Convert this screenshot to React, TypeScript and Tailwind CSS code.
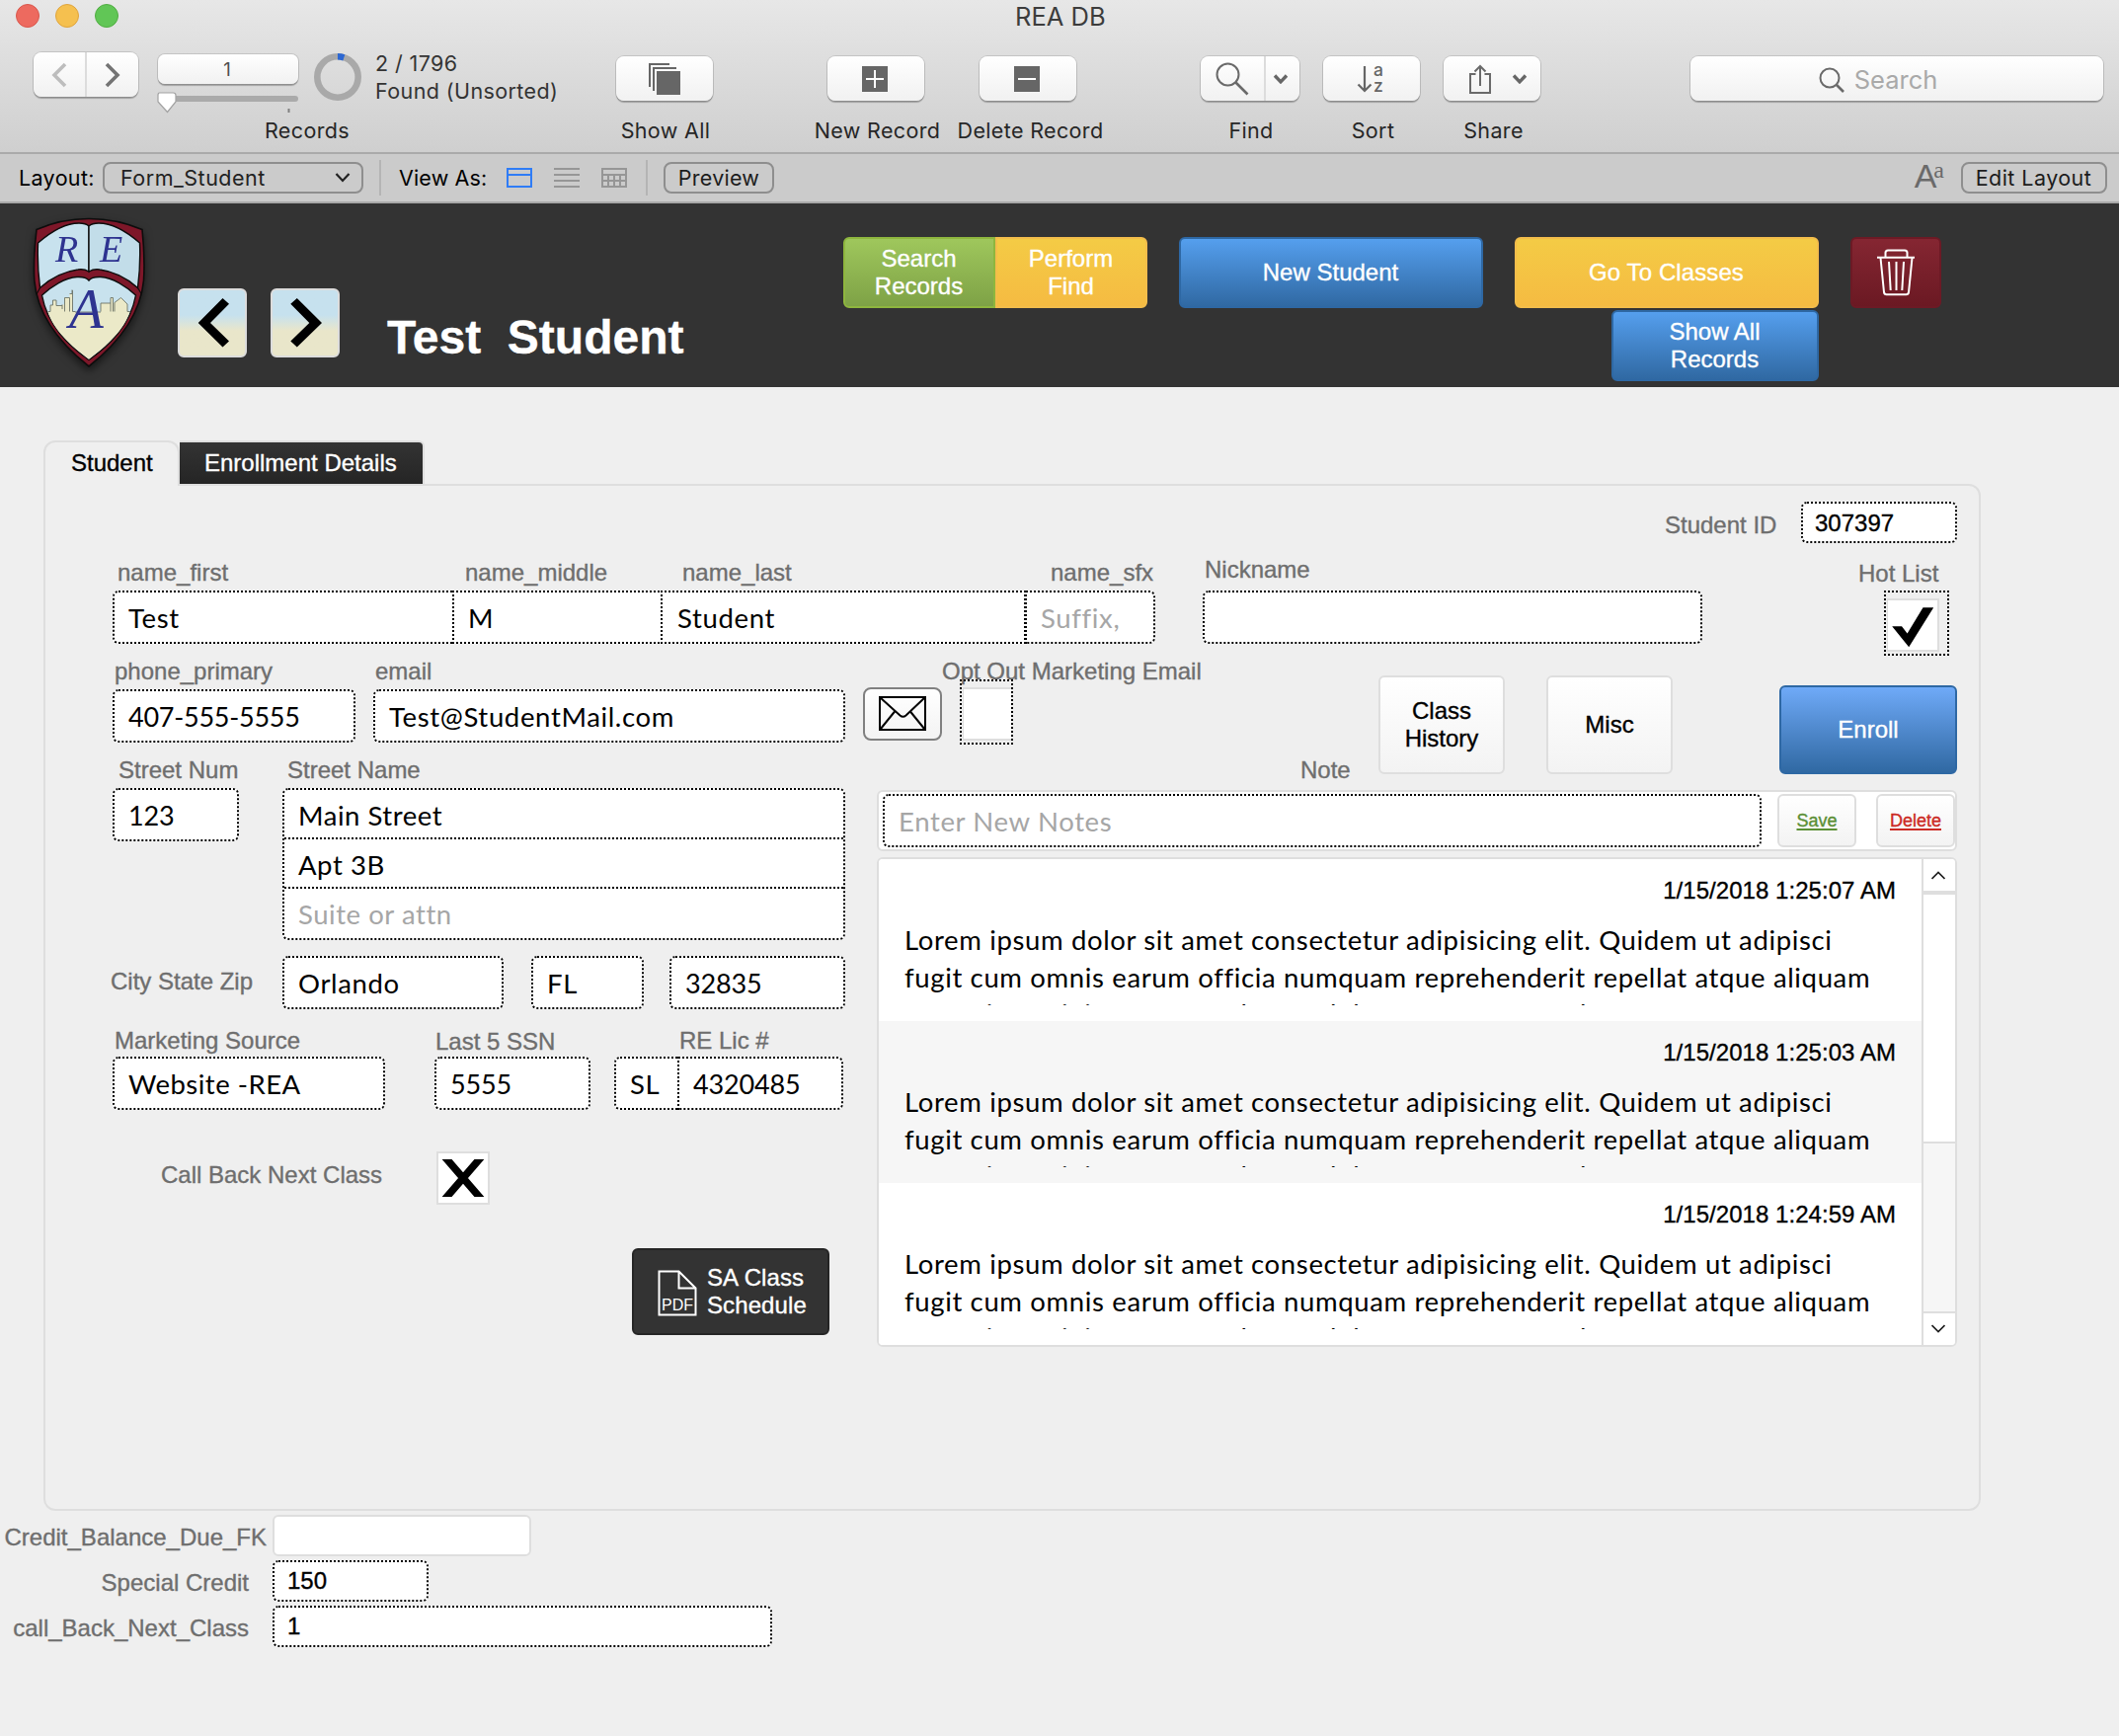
import type { ReactNode } from "react";

const UI = "font-['Inter',sans-serif] [-webkit-text-stroke:0px]";

/* ---------- shared pieces ---------- */

function Label({ children, className = "" }: { children: ReactNode; className?: string }) {
  return (
    <div className={`shrink-0 whitespace-pre pl-px text-[24px] leading-[28px] text-[#6e6e6e] ${className}`}>{children}</div>
  );
}

function Field({
  children,
  className = "",
  placeholder = false,
  numeric = false,
}: {
  children?: ReactNode;
  className?: string;
  placeholder?: boolean;
  numeric?: boolean;
}) {
  return (
    <div
      className={`flex h-[54px] shrink-0 items-center whitespace-nowrap border-2 border-dotted border-black bg-white pl-[14px] pt-[2px] font-['Lato',sans-serif] leading-[34px] [-webkit-text-stroke:0px] ${
        numeric ? "text-[27px] tracking-[-0.15px]" : "text-[27.5px] tracking-[0.65px]"
      } ${placeholder ? "text-[#a6a6a6]" : "text-black"} ${className}`}
    >
      {children}
    </div>
  );
}

function ToolButton({ children, className = "" }: { children?: ReactNode; className?: string }) {
  return (
    <div
      className={`flex h-[45px] items-center justify-center rounded-[8px] bg-linear-to-b from-white to-[#f1f1f1] shadow-[0_0_0_1px_rgba(0,0,0,0.12),0_2px_1px_rgba(0,0,0,0.25)] ${className}`}
    >
      {children}
    </div>
  );
}

function ToolItem({ label, className = "", children }: { label: string; className?: string; children: ReactNode }) {
  return (
    <div className={`flex shrink-0 flex-col items-center ${className}`}>
      {children}
      <div className="mt-[16px] whitespace-nowrap pl-[3px] text-[21.5px] leading-[28px] tracking-[0.35px] text-[#262626]">
        {label}
      </div>
    </div>
  );
}

function HeaderButton({ children, className = "" }: { children: ReactNode; className?: string }) {
  return (
    <div
      className={`flex h-[72px] shrink-0 items-center justify-center border-2 bg-linear-to-b pr-px text-center text-[24px] leading-[28px] text-white ${className}`}
    >
      {children}
    </div>
  );
}

function Chevron({ className = "" }: { className?: string }) {
  return (
    <svg className={className} width="16" height="10" viewBox="0 0 16 10" fill="none" stroke="#666" strokeWidth="3.400">
      <path d="M2 1.5 8 7.8 14 1.5" />
    </svg>
  );
}

/* ---------- window chrome ---------- */

function Toolbar() {
  return (
    <div className={`h-[156px] border-b-2 border-[#aaaaaa] bg-linear-to-b from-[#e7e7e7] to-[#cfcfcf] ${UI}`}>
      <div className="flex h-[53px] items-start">
        <div className="ml-[16px] mt-[4px] flex gap-[16px]">
          <div className="size-[24px] rounded-full border border-[#d9574c] bg-[#ed6a5f]" />
          <div className="size-[24px] rounded-full border border-[#dfa43c] bg-[#f5c04f]" />
          <div className="size-[24px] rounded-full border border-[#51ad42] bg-[#61c656]" />
        </div>
        <div className="ml-[908px] text-[25.5px] leading-[34px] text-[#3c3c3c]">REA DB</div>
      </div>
      <div className="flex items-start">
        <div className="ml-[34px] flex h-[45px] w-[106px] shrink-0 rounded-[8px] bg-linear-to-b from-white to-[#f1f1f1] shadow-[0_0_0_1px_rgba(0,0,0,0.12),0_2px_1px_rgba(0,0,0,0.25)]">
          <div className="flex w-[54px] items-center justify-center border-r-2 border-[#dcdcdc]">
            <svg width="16" height="26" viewBox="0 0 16 26" fill="none" stroke="#bdbdbd" strokeWidth="3.6">
              <path d="M14 2 3 13 14 24" />
            </svg>
          </div>
          <div className="flex w-[52px] items-center justify-center">
            <svg width="16" height="26" viewBox="0 0 16 26" fill="none" stroke="#747474" strokeWidth="3.6">
              <path d="M2 2 13 13 2 24" />
            </svg>
          </div>
        </div>
        <div className="ml-[20px] flex w-[404px] shrink-0 flex-col">
          <div className="flex h-[62px]">
            <div className="w-[142px]">
              <div className="mt-[2px] flex h-[30px] items-center justify-center rounded-[7px] bg-linear-to-b from-white to-[#f1f1f1] pr-[2px] pt-[2px] text-[18.5px] text-[#4f4f4f] shadow-[0_0_0_1px_rgba(0,0,0,0.12),0_2px_1px_rgba(0,0,0,0.25)]">
                1
              </div>
              <svg className="mt-[8px] overflow-visible" width="142" height="22" viewBox="0 0 142 22">
                <rect x="6" y="4" width="136" height="6" rx="3" fill="#aaaaaa" />
                <rect x="131.5" y="17" width="2" height="4" fill="#808080" />
                <path
                  d="M1.5 1H15.500q2.500 0 2.500 2.500V10L9.500 20.500 0 10V3.500Q0 1 1.500 1Z"
                  fill="#fff"
                  stroke="#a2a2a2"
                  strokeWidth="1.200"
                />
              </svg>
            </div>
            <svg className="ml-[16px] mt-px shrink-0" width="48" height="48" viewBox="0 0 48 48" fill="none">
              <circle cx="24" cy="24" r="20.700" stroke="#a9a9a9" strokeWidth="6.600" />
              <path d="M24 3.300A20.700 20.700 0 0 1 30.300 4.300" stroke="#2c67d2" strokeWidth="6.600" />
            </svg>
            <div className="-mt-[3px] ml-[14px] whitespace-nowrap text-[21.5px] leading-[28px] tracking-[0.4px] text-[#333]">
              <div>2 / 1796</div>
              <div>Found (Unsorted)</div>
            </div>
          </div>
          <div className="ml-[108px] mt-[3px] text-[21.5px] leading-[28px] tracking-[0.35px] text-[#262626]">Records</div>
        </div>
        <ToolItem label="Show All" className="ml-[59px] mt-[4px] w-[99px]">
          <ToolButton className="w-[98px]">
            <svg width="32" height="32" viewBox="0 0 32 32" fill="none" stroke="#666" strokeWidth="2">
              <path d="M1 24V1H21M5 28V5H28" />
              <path d="M8 8H32V32H8Z" fill="#666" stroke="none" />
            </svg>
          </ToolButton>
        </ToolItem>
        <ToolItem label="New Record" className="ml-[101px] mt-[4px] w-[128px]">
          <ToolButton className="w-[98px] pr-[2px]">
            <svg width="26" height="26" viewBox="0 0 26 26" fill="none" stroke="#fff" strokeWidth="2">
              <path d="M0 0H26V26H0Z" fill="#666" stroke="none" />
              <path d="M4 13H22M13 4V22" />
            </svg>
          </ToolButton>
        </ToolItem>
        <ToolItem label="Delete Record" className="ml-[16px] mt-[4px] w-[150px]">
          <ToolButton className="mr-[3px] w-[98px] pr-[2px]">
            <svg width="26" height="26" viewBox="0 0 26 26" fill="none" stroke="#fff" strokeWidth="2">
              <path d="M0 0H26V26H0Z" fill="#666" stroke="none" />
              <path d="M4 13H22" />
            </svg>
          </ToolButton>
        </ToolItem>
        <ToolItem label="Find" className="ml-[97px] mt-[4px] w-[103px]">
          <ToolButton className="w-[100px]">
            <div className="flex h-full w-[66px] items-center justify-center border-r-2 border-[#dcdcdc] pt-px">
              <svg width="34" height="34" viewBox="0 0 34 34" fill="none" stroke="#6a6a6a" strokeWidth="2">
                <circle cx="12.500" cy="12.500" r="11" />
                <path d="M20.500 20.500 32.500 32.500" strokeWidth="2.600" />
              </svg>
            </div>
            <div className="flex w-[34px] items-center justify-center pr-[3px]">
              <Chevron />
            </div>
          </ToolButton>
        </ToolItem>
        <ToolItem label="Sort" className="ml-[22px] mt-[4px] w-[100px]">
          <ToolButton className="w-[98px]">
            <svg className="overflow-visible" width="28" height="30" viewBox="0 0 28 30" fill="none" stroke="#666" strokeWidth="2.200">
              <path d="M7 2V27M0.500 20.500 7 27 13.500 20.500" />
              <text x="16" y="12" className="font-['Inter',sans-serif]" fontSize="17.500" fontWeight="500" fill="#666" stroke="none">
                a
              </text>
              <text x="16" y="27.500" className="font-['Inter',sans-serif]" fontSize="17.500" fontWeight="500" fill="#666" stroke="none">
                z
              </text>
            </svg>
          </ToolButton>
        </ToolItem>
        <ToolItem label="Share" className="ml-[23px] mt-[4px] w-[98px]">
          <ToolButton className="w-[98px] gap-[20px]">
            <svg className="ml-[12px]" width="24" height="32" viewBox="0 0 24 32" fill="none" stroke="#6a6a6a" strokeWidth="2">
              <path d="M7.500 11H2V30H22V11H16.500M12 23V3M6.500 8.500 12 3 17.500 8.500" />
            </svg>
            <Chevron />
          </ToolButton>
        </ToolItem>
        <ToolButton className="ml-[152px] mt-[4px] w-[418px] shrink-0 pr-[38px]">
          <svg className="mt-[2px]" width="26" height="26" viewBox="0 0 26 26" fill="none" stroke="#6a6a6a" strokeWidth="2">
            <circle cx="11" cy="11" r="9.500" />
            <path d="M18 18 25 25" strokeWidth="2.600" />
          </svg>
          <div className="ml-[10px] mt-[2px] text-[25.5px] leading-[34px] text-[#a9a9a9]">Search</div>
        </ToolButton>
      </div>
    </div>
  );
}

function LayoutBar() {
  return (
    <div
      className={`flex h-[50px] items-center border-b-2 border-[#a9a9a9] bg-[#cbcbcb] pb-[1px] text-[21.5px] leading-[28px] tracking-[0.25px] text-black ${UI}`}
    >
      <div className="ml-[19px] w-[85px] shrink-0 whitespace-nowrap tracking-[0.35px]">Layout:</div>
      <div className="flex h-[32px] w-[264px] shrink-0 items-center justify-between rounded-[8px] border-2 border-[#8e8e8e] pl-[16px] pr-[11px] tracking-[0.5px] text-[#222]">
        <span>Form_Student</span>
        <svg width="16" height="10" viewBox="0 0 16 10" fill="none" stroke="#222" strokeWidth="2.200">
          <path d="M1.500 1 8 8 14.500 1" />
        </svg>
      </div>
      <div className="ml-[16px] h-[36px] w-[2px] bg-[#b4b4b4]" />
      <div className="ml-[18px] w-[109px] shrink-0 whitespace-nowrap tracking-[0.15px]">View As:</div>
      <svg width="26" height="20" viewBox="0 0 26 20" fill="none" stroke="#2f7cf6" strokeWidth="2">
        <path d="M1 1H25V19H1ZM1 7H25" />
      </svg>
      <svg className="ml-[22px]" width="26" height="20" viewBox="0 0 26 20" fill="none" stroke="#969696" strokeWidth="2">
        <path d="M0 1H26M0 7H26M0 13H26M0 19H26" />
      </svg>
      <svg className="ml-[22px]" width="26" height="20" viewBox="0 0 26 20" fill="none" stroke="#969696" strokeWidth="2">
        <path d="M1 1H25V19H1ZM1 7H25M1 13H25M7 7V19M13 7V19M19 7V19" />
      </svg>
      <div className="ml-[19px] h-[36px] w-[2px] bg-[#b4b4b4]" />
      <div className="ml-[16px] flex h-[32px] w-[112px] items-center justify-center rounded-[8px] border-2 border-[#8e8e8e] text-[#1c1c1c]">
        Preview
      </div>
      <div className="ml-auto mr-[17px] flex h-[28px] items-start leading-none tracking-normal text-[#6a6a6a]">
        <span className="-mt-[4px] font-['Liberation_Sans',sans-serif] text-[34px] leading-[32px] tracking-[-3px]">A</span>
        <span className="-mt-[4px] font-['Liberation_Serif',serif] text-[24px] leading-[20px]">a</span>
      </div>
      <div className="mr-[12px] flex h-[32px] w-[148px] items-center justify-center whitespace-nowrap rounded-[8px] border-2 border-[#8e8e8e] pr-px tracking-[0.45px] text-[#1c1c1c]">
        Edit Layout
      </div>
    </div>
  );
}

/* ---------- school header ---------- */

function Crest() {
  return (
    <svg
      className="ml-[28px] mt-[10px] shrink-0 drop-shadow-[0_4px_4px_rgba(0,0,0,0.55)]"
      width="124"
      height="162"
      viewBox="28 216 124 162"
    >
      <path
        d="M37 232.500Q62 221.500 90 221.500T144 232.500Q147 262 145.500 284C142 322 114 352 90 371C66 352 38 322 34.800 284Q33.500 262 37 232.500Z"
        fill="#7e1729"
        stroke="#0d0d0d"
        strokeWidth="1.600"
      />
      <path
        d="M38.500 246C50 236 66 226 80 226Q87 226 90 229V275Q85 272 79 273C64 275 50 283 40.500 291.500Q37.500 268 38.500 246Z"
        fill="#c8e2ee"
        stroke="#0d0d0d"
        strokeWidth="1.400"
      />
      <path
        d="M141.500 246C130 236 114 226 100 226Q93 226 90 229V275Q95 272 101 273C116 275 130 283 139.500 291.500Q142.500 268 141.500 246Z"
        fill="#c2dde9"
        stroke="#0d0d0d"
        strokeWidth="1.400"
      />
      <path
        d="M42.500 299C52 290 66 281 78 280.500Q87 280 90 284Q93 280 102 280.500C114 281 128 290 137.500 299C132 330 110 350 90 364.500C70 350 48 330 42.500 299Z"
        fill="#c8e2ee"
        stroke="#0d0d0d"
        strokeWidth="1.400"
      />
      <path
        d="M48.500 315.500H51V309H53.500V304H57V309.500H63V308.500H65V301.500H70.500V297.500H73V293.500V315.500H76V316H102V307H112V301.500H114.500V306.500H116L122.500 301.500 129 308V315.500H131.500C126 334 108 350.500 90 363.700C72 350.500 54 334 48.500 315.500Z"
        fill="#ebe9c8"
      />
      <path
        d="M48.500 315.500H51V309H53.500V304H57V309.500H63M63 308.500V313M65.500 315.500V301.500H70.500V315.500M70.500 297.500H73V293.500M73.500 294V315.500H76V316M102 315.500V307H112V301.500H114.500V315.500M112 307V315.500M116 315.500V306.500L122.500 301.500 129 308V315.500H132M76 316H102"
        fill="none"
        stroke="#6d7467"
        strokeWidth="0.900"
      />
      <path d="M40.500 291.500 37 298M139.500 291.500 143.500 298" stroke="#0d0d0d" strokeWidth="1.200" />
      <g className="font-['Liberation_Serif',serif] italic" fill="#2e3390">
        <text x="56" y="264.500" fontSize="38">
          R
        </text>
        <text x="101" y="264.500" fontSize="38">
          E
        </text>
        <text x="70" y="331.500" fontSize="57">
          A
        </text>
      </g>
    </svg>
  );
}

function ArrowButton({ d, className = "" }: { d: string; className?: string }) {
  return (
    <div
      className={`size-[70px] shrink-0 rounded-[6px] border-2 border-[#dcdcdc] bg-linear-to-b from-[#c6e1ee] from-38% to-[#e9e6ca] to-62% ${className}`}
    >
      <svg width="66" height="66" viewBox="0 0 66 66">
        <path d={d} fill="#000" />
      </svg>
    </div>
  );
}

function SchoolHeader() {
  return (
    <div className="flex h-[186px] items-start bg-[#333333]">
      <Crest />
      <ArrowButton className="ml-[28px] mt-[86px]" d="M43.500 8 50 13.700 31 33 50 51.500 43.500 57.500 18.700 33Z" />
      <ArrowButton className="ml-[24px] mt-[86px]" d="M24.800 8 18.300 13.700 37.300 33 18.300 51.500 24.800 57.500 50 33Z" />
      <div className="ml-[48px] mt-[109px] w-[462px] shrink-0 whitespace-pre text-[48px] font-bold leading-[54px] text-white">
        {"Test  Student"}
      </div>
      <div className="mt-[34px] flex items-start">
        <HeaderButton className="w-[154px] rounded-l-[6px] border-[#8eb63e] from-[#9fc75c] to-[#7ea246]">
          Search
          <br />
          Records
        </HeaderButton>
        <HeaderButton className="w-[154px] rounded-r-[6px] border-[#f3bd4b] from-[#f4cb45] to-[#f5bb42]">
          Perform
          <br />
          Find
        </HeaderButton>
        <HeaderButton className="ml-[32px] w-[308px] rounded-[6px] border-[#2e68a4] from-[#559fee] to-[#3069a3]">
          New Student
        </HeaderButton>
        <div className="ml-[32px] flex w-[308px] flex-col items-end gap-[2px]">
          <HeaderButton className="w-[308px] rounded-[6px] border-[#f3bd4b] from-[#f4cb45] to-[#f5bb42] tracking-[0.1px]">
            Go To Classes
          </HeaderButton>
          <HeaderButton className="w-[210px] rounded-[6px] border-[#2e68a4] from-[#559fee] to-[#3069a3]">
            Show All
            <br />
            Records
          </HeaderButton>
        </div>
        <HeaderButton className="ml-[32px] w-[92px] rounded-[6px] border-[#6d1a25] from-[#852632] to-[#6b1923]">
          <svg width="38" height="48" viewBox="0 0 38 48" fill="none" stroke="#fff" strokeWidth="2">
            <path d="M0 8.700H38M8.500 8.500V4Q8.500 1.500 11 1.500H28Q30.500 1.500 30.500 4V8.500" />
            <path d="M3.500 9 7 44Q7.300 46.200 9.500 46.200H29.500Q31.700 46.200 32 44L35.500 9" />
            <path d="M12 13 13.700 42M19.500 13V42M27 13 25.300 42" />
          </svg>
        </HeaderButton>
      </div>
    </div>
  );
}

/* ---------- form panel ---------- */

function Tabs() {
  return (
    <div className="relative z-10 -mb-[2px] ml-[44px] flex h-[46px] items-start">
      <div className="h-[46px] w-[138px] rounded-t-[12px] border-2 border-b-0 border-[#dedede] bg-[#efefef] pl-[26px] pt-[7px] text-[24px] leading-[28px] text-black">
        Student
      </div>
      <div className="h-[44px] w-[248px] rounded-tr-[6px] border-r-2 border-t-2 border-[#dedede] bg-linear-to-b from-[#333] to-[#252525] pl-[25px] pt-[7px] text-[24px] leading-[28px] text-white">
        Enrollment Details
      </div>
    </div>
  );
}

function PlainButton({ children, className = "" }: { children: ReactNode; className?: string }) {
  return (
    <div
      className={`flex shrink-0 items-center justify-center rounded-[6px] border-2 border-[#dedede] bg-linear-to-b from-white to-[#f3f3f3] text-center ${className}`}
    >
      {children}
    </div>
  );
}

const notes = [
  { stamp: "1/15/2018 1:25:07 AM", shaded: false },
  { stamp: "1/15/2018 1:25:03 AM", shaded: true },
  { stamp: "1/15/2018 1:24:59 AM", shaded: false },
];

function NoteRow({ stamp, shaded }: { stamp: string; shaded: boolean }) {
  return (
    <div className={`h-[164px] pl-[26px] ${shaded ? "bg-[#f6f6f6]" : "bg-white"}`}>
      <div className="h-[60px] pr-[26px] pt-[18px] text-right text-[24px] leading-[28px] tracking-[0.05px] text-black">
        {stamp}
      </div>
      <div className="h-[88px] overflow-hidden whitespace-nowrap pt-[3px] font-['Lato',sans-serif] text-[27.5px] leading-[38px] tracking-[0.64px] text-black [-webkit-text-stroke:0px]">
        <div>Lorem ipsum dolor sit amet consectetur adipisicing elit. Quidem ut adipisci</div>
        <div>fugit cum omnis earum officia numquam reprehenderit repellat atque aliquam</div>
        <div className="-mt-px">rerum iste minima natus vel quas dolor nam quaerat ad error summa. Porro cum velit id beatae</div>
      </div>
    </div>
  );
}

function Notes() {
  return (
    <div className="mt-[2px] w-[1094px] shrink-0">
      <div className="flex h-[62px] items-start rounded-[6px] border-2 border-[#dedede] bg-white pl-[4px] pt-[2px]">
        <Field placeholder className="w-[890px] rounded-[6px]">
          Enter New Notes
        </Field>
        <PlainButton className="ml-[16px] h-[54px] w-[80px] text-[18px] leading-[22px]">
          <span className="text-[#5b8f35] underline decoration-2 underline-offset-2">Save</span>
        </PlainButton>
        <PlainButton className="ml-[20px] h-[54px] w-[80px] text-[18px] leading-[22px]">
          <span className="text-[#cc2a24] underline decoration-2 underline-offset-2">Delete</span>
        </PlainButton>
      </div>
      <div className="mt-[6px] flex h-[496px] overflow-hidden rounded-[6px] border-2 border-[#dedede] bg-white">
        <div className="w-[1056px]">
          {notes.map((n) => (
            <NoteRow key={n.stamp} {...n} />
          ))}
        </div>
        <div className="flex w-[34px] flex-col border-l-2 border-[#dedede] bg-[#f6f6f6]">
          <div className="flex h-[36px] items-center justify-center border-b-4 border-[#dedede] bg-white pr-[2px] pt-px">
            <svg width="14" height="9" viewBox="0 0 14 9" fill="none" stroke="#222" strokeWidth="1.700">
              <path d="M0.500 8 7 1.500 13.500 8" />
            </svg>
          </div>
          <div className="h-[252px] border-b-2 border-[#dedede] bg-white" />
          <div className="h-[170px]" />
          <div className="flex h-[34px] items-center justify-center border-t-2 border-[#dedede] bg-white pb-[2px] pr-[2px]">
            <svg width="14" height="9" viewBox="0 0 14 9" fill="none" stroke="#222" strokeWidth="1.700">
              <path d="M0.500 1 7 7.500 13.500 1" />
            </svg>
          </div>
        </div>
      </div>
    </div>
  );
}

function Address() {
  return (
    <div className="flex items-start">
      <Field numeric className="ml-[68px] w-[128px] rounded-[6px]">
        123
      </Field>
      <div className="ml-[44px] h-[154px] w-[570px] shrink-0 rounded-[6px] border-2 border-dotted border-black bg-white font-['Lato',sans-serif] text-[27.5px] leading-[34px] tracking-[0.55px] [-webkit-text-stroke:0px]">
        <div className="flex h-[50px] items-center border-b-2 border-dotted border-black pl-[14px] pt-[4px]">Main Street</div>
        <div className="flex h-[50px] items-center border-b-2 border-dotted border-black pl-[14px] pt-[4px]">Apt 3B</div>
        <div className="flex h-[50px] items-center pl-[14px] pt-[2px] text-[#a6a6a6]">Suite or attn</div>
      </div>
    </div>
  );
}

function StudentForm() {
  return (
    <div className="ml-[44px] h-[1040px] w-[1962px] rounded-[12px] rounded-tl-none border-2 border-[#dedede] pt-[16px]">
      <div className="flex h-[42px] items-start">
        <Label className="ml-[1639px] mt-[10px] w-[139px]">Student ID</Label>
        <div className="flex h-[42px] w-[158px] items-center rounded-[6px] border-2 border-dotted border-black bg-white pl-[12px] pt-px text-[24px] leading-[28px]">
          307397
        </div>
      </div>

      <div className="flex h-[48px] items-start">
        <Label className="ml-[72px] mt-[16px] w-[352px]">name_first</Label>
        <Label className="mt-[16px] w-[220px]">name_middle</Label>
        <Label className="mt-[16px] w-[373px]">name_last</Label>
        <Label className="mt-[16px] w-[156px]">name_sfx</Label>
        <Label className="mt-[13px] w-[662px]">Nickname</Label>
        <Label className="mt-[17px]">Hot List</Label>
      </div>

      <div className="flex h-[54px] items-start">
        <Field className="ml-[68px] w-[346px] rounded-l-[6px]">Test</Field>
        <Field className="-ml-[2px] w-[214px]">M</Field>
        <Field className="-ml-[3px] w-[370px] !pl-[15px]">Student</Field>
        <Field placeholder className="-ml-px w-[132px] rounded-r-[6px]">
          Suffix,
        </Field>
        <Field className="ml-[48px] w-[506px] rounded-[6px]" />
        <div className="ml-[184px] h-[66px] w-[66px] shrink-0 border-2 border-dotted border-black pl-[1px] pt-[6px]">
          <div className="h-[54px] w-[53px] border-2 border-l border-[#dedede] bg-white">
            <svg width="50" height="50" viewBox="1912 608 50 50">
              <path d="M1916.200 634.300H1926L1931.600 641.500 1947.500 615.300H1958.200L1933.200 655.300Z" fill="#000" />
            </svg>
          </div>
        </div>
      </div>

      <div className="flex h-[146px] items-start">
        <div className="w-[1350px] shrink-0">
          <div className="flex h-[46px] items-start">
            <Label className="ml-[69px] mt-[14px] w-[264px]">phone_primary</Label>
            <Label className="mt-[14px] w-[574px]">email</Label>
            <Label className="mt-[14px]">Opt Out Marketing Email</Label>
          </div>
          <div className="flex h-[54px] items-start">
            <Field numeric className="ml-[68px] w-[246px] rounded-[6px] !tracking-[-0.25px]">
              407-555-5555
            </Field>
            <Field className="ml-[18px] w-[478px] rounded-[6px]">Test@StudentMail.com</Field>
            <div className="-mt-[2px] ml-[18px] flex h-[54px] w-[80px] shrink-0 items-center justify-center rounded-[8px] border-2 border-[#808080] bg-linear-to-b from-white to-[#f3f3f3]">
              <svg className="-mt-[2px]" width="48" height="35" viewBox="0 0 48 35" fill="none" stroke="#000" strokeWidth="2">
                <path d="M1 1H47V34H1ZM1.500 1.500 21.500 19.500Q24.500 22 27.500 19.500L46.500 1.500M1.500 33.500 16.500 15M46.500 33.500 31.500 15" />
              </svg>
            </div>
            <div className="-mt-[10px] ml-[18px] h-[66px] w-[54px] shrink-0 border-2 border-dotted border-black pl-[1px] pt-[6px]">
              <div className="h-[54px] border-y-2 border-l border-[#dedede] bg-white" />
            </div>
          </div>
          <div className="flex h-[46px] items-start">
            <Label className="ml-[73px] mt-[14px] w-[171px]">Street Num</Label>
            <Label className="mt-[14px] w-[1026px]">Street Name</Label>
            <Label className="mt-[14px]">Note</Label>
          </div>
        </div>
        <PlainButton className="mt-[32px] h-[100px] w-[128px] text-[24px] leading-[28px]">
          Class
          <br />
          History
        </PlainButton>
        <PlainButton className="ml-[42px] mt-[32px] h-[100px] w-[128px] text-[24px] leading-[28px]">Misc</PlainButton>
        <div className="ml-[108px] mt-[42px] flex h-[90px] w-[180px] shrink-0 items-center justify-center rounded-[6px] border-2 border-[#2e68a4] bg-linear-to-b from-[#6faaf8] to-[#3069a3] text-[24px] leading-[28px] text-white">
          Enroll
        </div>
      </div>

      <div className="flex items-start">
        <div className="w-[842px] shrink-0">
          <Address />
          <div className="mt-[16px] flex items-start">
            <Label className="ml-[65px] mt-[12px] w-[175px]">City State Zip</Label>
            <Field className="w-[224px] rounded-[6px]">Orlando</Field>
            <Field className="ml-[28px] w-[114px] rounded-[6px]">FL</Field>
            <Field numeric className="ml-[26px] w-[178px] rounded-[6px]">
              32835
            </Field>
          </div>
          <div className="flex h-[48px] items-start">
            <Label className="ml-[69px] mt-[18px] w-[325px]">Marketing Source</Label>
            <Label className="mt-[19px] w-[247px]">Last 5 SSN</Label>
            <Label className="mt-[18px]">RE Lic #</Label>
          </div>
          <div className="flex items-start">
            <Field className="ml-[68px] w-[276px] rounded-[6px] !tracking-[0.5px]">Website -REA</Field>
            <Field numeric className="ml-[50px] w-[158px] rounded-[6px]">
              5555
            </Field>
            <Field className="ml-[24px] w-[66px] rounded-l-[6px]">SL</Field>
            <Field numeric className="-ml-[2px] w-[168px] rounded-r-[6px]">
              4320485
            </Field>
          </div>
          <div className="mt-[42px] flex items-start">
            <Label className="ml-[116px] mt-[10px] w-[280px]">Call Back Next Class</Label>
            <div className="h-[54px] w-[54px] border-2 border-[#dedede] bg-white">
              <svg width="50" height="50" viewBox="0 0 50 50" fill="none" stroke="#000" strokeWidth="7.500">
                <clipPath id="mark">
                  <rect x="2" y="6" width="46" height="38" />
                </clipPath>
                <path clipPath="url(#mark)" d="M6 3 44 47M44 3 6 47" />
              </svg>
            </div>
          </div>
          <div className="ml-[594px] mt-[44px] flex h-[88px] w-[200px] items-center rounded-[6px] border-2 border-[#252525] bg-[#333] text-[24px] leading-[28px] text-white">
            <svg
              className="ml-[24px] mt-[2px] shrink-0 [-webkit-text-stroke:0px]"
              width="40"
              height="47"
              viewBox="0 0 40 47"
              fill="none"
              stroke="#fff"
              strokeWidth="2"
            >
              <path d="M1.500 1.500H21.500L38.500 18.500V45.500H1.500ZM21.500 1.500V18.500H38.500" />
              <text x="4" y="41" fontSize="16" className="font-['Liberation_Sans',sans-serif]" fill="#fff" stroke="none">
                PDF
              </text>
            </svg>
            <div className="ml-[10px] whitespace-nowrap tracking-[0.1px]">
              SA Class
              <br />
              Schedule
            </div>
          </div>
        </div>
        <Notes />
      </div>
    </div>
  );
}

function ExtraFields() {
  const box = "flex h-[42px] items-center rounded-[6px] border-2 bg-white pl-[13px] text-[24px] leading-[28px] text-black";
  return (
    <div className="flex flex-col gap-[4px] pt-[4px]">
      <div className="flex items-start">
        <Label className="mt-[9px] w-[276px] pr-[6px] text-right">Credit_Balance_Due_FK</Label>
        <div className={`${box} w-[262px] border-[#dedede]`} />
      </div>
      <div className="flex items-start">
        <Label className="mt-[9px] w-[276px] pr-[24px] text-right">Special Credit</Label>
        <div className={`${box} w-[158px] border-dotted border-black`}>150</div>
      </div>
      <div className="flex items-start">
        <Label className="mt-[9px] w-[276px] pr-[24px] text-right">call_Back_Next_Class</Label>
        <div className={`${box} w-[506px] border-dotted border-black`}>1</div>
      </div>
    </div>
  );
}

export default function App() {
  return (
    <div className="h-[1758px] w-[2146px] overflow-hidden bg-[#efefef] font-['Liberation_Sans',Arial,sans-serif] [-webkit-text-stroke:0.35px]">
      <Toolbar />
      <LayoutBar />
      <SchoolHeader />
      <div className="h-[54px]" />
      <Tabs />
      <StudentForm />
      <ExtraFields />
    </div>
  );
}
